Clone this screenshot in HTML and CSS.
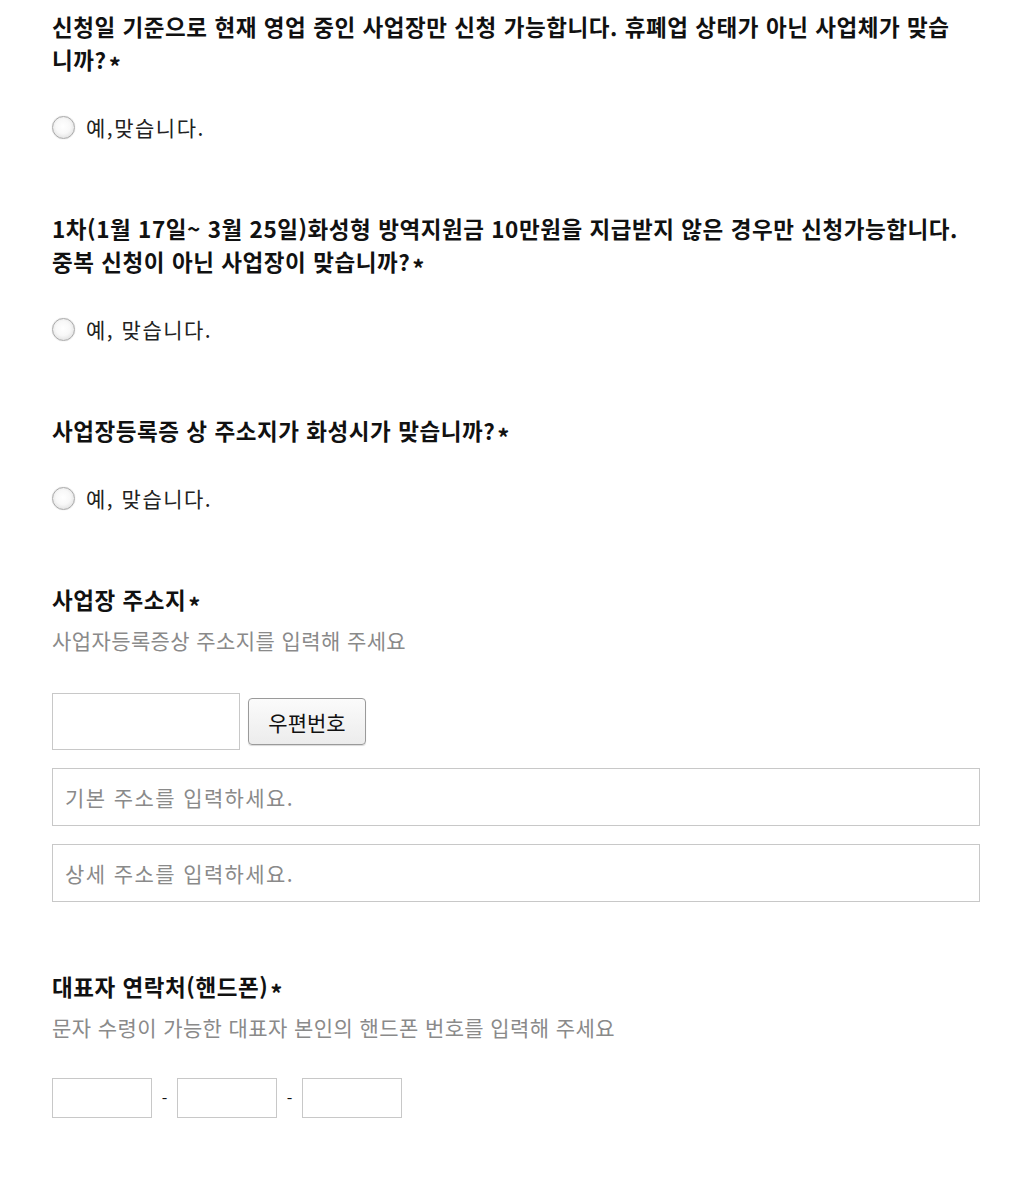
FILE: index.html
```html
<!DOCTYPE html>
<html lang="ko">
<head>
<meta charset="utf-8">
<link rel="stylesheet" href="styles.css">
</head>
<body>
<form class="form">
  <div class="question">
    <h3 class="title">신청일 기준으로 현재 영업 중인 사업장만 신청 가능합니다. 휴폐업 상태가 아닌 사업체가 맞습니까?<span class="req">*</span></h3>
    <label class="option"><input type="radio" class="radio" name="q1"><span>예,맞습니다.</span></label>
  </div>
  <div class="question">
    <h3 class="title">1차(1월 17일~ 3월 25일)화성형 방역지원금 10만원을 지급받지 않은 경우만 신청가능합니다. 중복 신청이 아닌 사업장이 맞습니까?<span class="req">*</span></h3>
    <label class="option"><input type="radio" class="radio" name="q2"><span>예, 맞습니다.</span></label>
  </div>
  <div class="question">
    <h3 class="title">사업장등록증 상 주소지가 화성시가 맞습니까?<span class="req">*</span></h3>
    <label class="option"><input type="radio" class="radio" name="q3"><span>예, 맞습니다.</span></label>
  </div>
  <div class="field">
    <h3 class="title">사업장 주소지<span class="req">*</span></h3>
    <p class="help">사업자등록증상 주소지를 입력해 주세요</p>
    <div class="zip-row">
      <input type="text" class="input zip">
      <button type="button" class="btn">우편번호</button>
    </div>
    <input type="text" class="input addr" placeholder="기본 주소를 입력하세요.">
    <input type="text" class="input addr" placeholder="상세 주소를 입력하세요.">
  </div>
  <div class="field">
    <h3 class="title">대표자 연락처(핸드폰)<span class="req">*</span></h3>
    <p class="help">문자 수령이 가능한 대표자 본인의 핸드폰 번호를 입력해 주세요</p>
    <div class="phone-row">
      <input type="text" class="input phone">
      <span class="dash">-</span>
      <input type="text" class="input phone">
      <span class="dash">-</span>
      <input type="text" class="input phone">
    </div>
  </div>
</form>
</body>
</html>
```
FILE: styles.css
```css
html, body {
  margin: 0;
  padding: 0;
  background: #fff;
}
body {
  font-family: "Noto Sans CJK KR", "Noto Sans", sans-serif;
  color: #111;
}
.form {
  width: 928px;
  margin: 0 0 0 52px;
  padding-top: 10px;
}
.question {
  margin-bottom: 70px;
}
.title {
  margin: 0;
  max-width: 910px;
  font-size: 22.5px;
  font-weight: 700;
  line-height: 33px;
  color: #111;
  letter-spacing: 0.55px;
}
.req {
  font-size: 24px;
  line-height: 0;
  margin-left: 2px;
  vertical-align: -7px;
}
.option {
  margin-top: 36px;
  height: 30px;
  display: flex;
  align-items: center;
  font-size: 21px;
  letter-spacing: 1.5px;
  color: #222;
}
.radio {
  appearance: none;
  -webkit-appearance: none;
  width: 23px;
  height: 23px;
  margin: 0 11px 0 0;
  border-radius: 50%;
  border: 1px solid #aaaaaa;
  background: radial-gradient(circle at 48% 45%, #ffffff 0%, #f8f8f8 45%, #e0e0e0 80%, #c8c8c8 100%);
  box-shadow: 0 0 1px rgba(0,0,0,0.25);
  box-sizing: border-box;
}
.field {
  margin-bottom: 68px;
}
.help {
  margin: 8px 0 0;
  font-size: 21px;
  letter-spacing: 0.4px;
  line-height: 33px;
  color: #8a8a8a;
}
.zip-row {
  margin-top: 36px;
  display: flex;
  align-items: center;
  gap: 8px;
}
.input {
  box-sizing: border-box;
  border: 1px solid #c8c8c8;
  background: #fff;
  font-family: inherit;
  font-size: 21px;
  outline: none;
  margin: 0;
}
.zip {
  width: 188px;
  height: 57px;
}
.btn {
  width: 118px;
  height: 47px;
  box-sizing: border-box;
  border: 1px solid #9a9a9a;
  border-radius: 4px;
  background: linear-gradient(#fbfbfb, #ececec);
  box-shadow: 0 1px 1px rgba(0,0,0,0.15);
  font-family: inherit;
  font-size: 21px;
  color: #111;
  padding: 0;
}
.addr {
  display: block;
  width: 928px;
  height: 58px;
  margin-top: 18px;
  padding: 0 12px;
  letter-spacing: 1.4px;
}
.addr::placeholder {
  color: #8a8a8a;
}
.phone-row {
  margin-top: 34px;
  display: flex;
  align-items: center;
}
.phone {
  width: 100px;
  height: 40px;
}
.dash {
  width: 25px;
  text-align: center;
  font-size: 16px;
  color: #111;
}
```
